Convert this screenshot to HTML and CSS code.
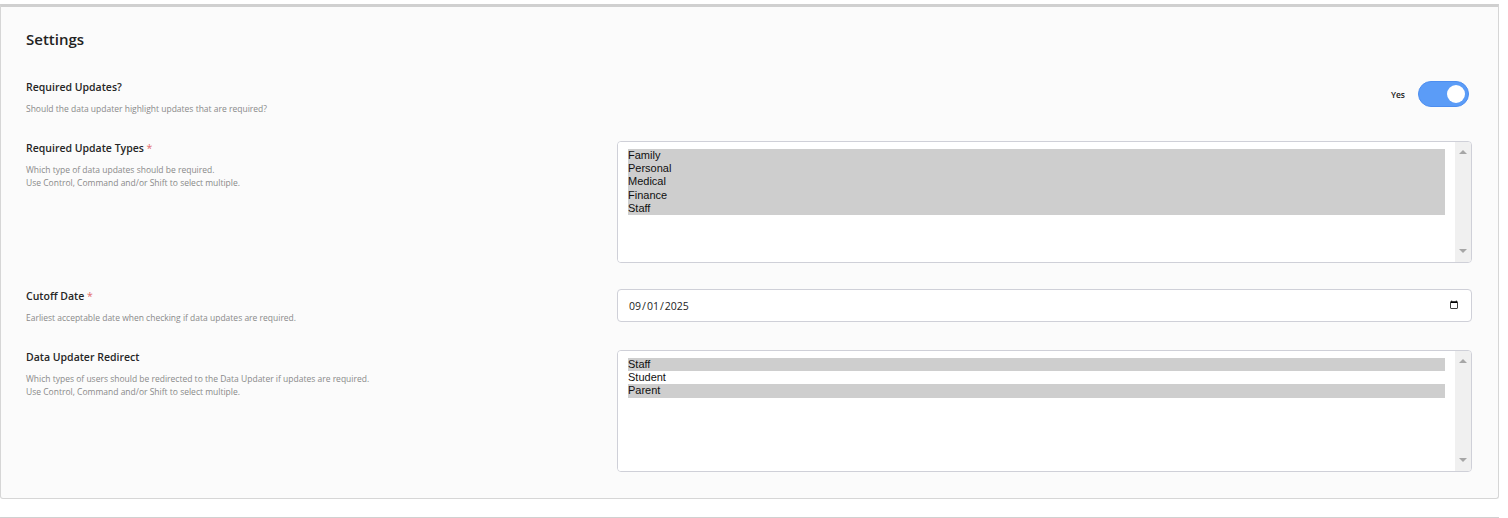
FILE: index.html
```html
<!DOCTYPE html>
<html lang="en-US">
<head>
    <meta charset="utf-8">
    <title>Settings</title>
    <link rel="stylesheet" href="styles.css">
</head>
<body>

<div class="card">
    <h2 class="card-title">Settings</h2>

    <div class="row row-switch">
        <div class="info">
            <label class="label">Required Updates?</label>
            <p class="help">Should the data updater highlight updates that are required?</p>
        </div>
        <div class="switch-wrap">
            <span class="switch-text">Yes</span>
            <span class="switch on"><span class="knob"></span></span>
        </div>
    </div>

    <div class="row">
        <div class="info">
            <label class="label">Required Update Types <span class="req">*</span></label>
            <p class="help">Which type of data updates should be required.<br>Use Control, Command and/or Shift to select multiple.</p>
        </div>
        <div class="listbox">
            <select multiple size="8">
                <option selected>Family</option>
                <option selected>Personal</option>
                <option selected>Medical</option>
                <option selected>Finance</option>
                <option selected>Staff</option>
            </select>
            <div class="scrollbar"><span class="arrow up"></span><span class="arrow down"></span></div>
        </div>
    </div>

    <div class="row">
        <div class="info">
            <label class="label">Cutoff Date <span class="req">*</span></label>
            <p class="help">Earliest acceptable date when checking if data updates are required.</p>
        </div>
        <input class="date" type="date" value="2025-09-01">
    </div>

    <div class="row">
        <div class="info">
            <label class="label">Data Updater Redirect</label>
            <p class="help">Which types of users should be redirected to the Data Updater if updates are required.<br>Use Control, Command and/or Shift to select multiple.</p>
        </div>
        <div class="listbox">
            <select multiple size="8">
                <option selected>Staff</option>
                <option>Student</option>
                <option selected>Parent</option>
            </select>
            <div class="scrollbar"><span class="arrow up"></span><span class="arrow down"></span></div>
        </div>
    </div>
</div>

<div class="card next"></div>

</body>
</html>
```

FILE: styles.css
```css
body, html{
margin: 0;
padding: 0;
background-color: white;
font-family: "Open Sans", "Noto Sans", sans-serif;
color: #222;
}

body{
padding-top: 4px;
height: 514px;
overflow: hidden;
}

.card{
background-color: #fbfbfb;
border: 1px solid #d6d6d6;
border-top: 3px solid #d0d0d0;
border-radius: 0 0 3px 3px;
padding: 0 26px 26px 25px;
box-sizing: border-box;
margin-bottom: 18px;
width: 1499px;
}

.card.next{
height: 20px;
padding: 0;
border-bottom: none;
margin-bottom: 0;
}

.card-title{
font-size: 15px;
font-weight: 600;
margin: 0;
padding: 22px 0 31px;
line-height: 20px;
}

.row{
display: grid;
grid-template-columns: 591px 1fr;
margin-bottom: 26px;
}

.row:last-child{
margin-bottom: 0;
}

.row-switch{
display: flex;
align-items: flex-start;
justify-content: space-between;
}

.label{
display: block;
font-size: 10.5px;
font-weight: 600;
line-height: 14px;
color: #262626;
}

.req{
color: #e26b6b;
font-weight: 400;
}

.help{
font-size: 8.5px;
line-height: 13px;
color: #8a8a8a;
margin: 8px 0 0;
}

.switch-wrap{
display: flex;
align-items: center;
gap: 13px;
margin: 1px 3px 0 0;
}

.switch-text{
font-size: 8.5px;
font-weight: 600;
color: #222;
}

.switch{
display: block;
position: relative;
width: 49px;
height: 24px;
border-radius: 13px;
background-color: #5b9cf7;
border: 1px solid #4d8ef0;
}

.knob{
position: absolute;
top: 3px;
right: 3px;
width: 18px;
height: 18px;
border-radius: 50%;
background-color: white;
}

.listbox{
display: flex;
height: 122px;
box-sizing: border-box;
border: 1px solid #cfd0d8;
border-radius: 4px;
background-color: white;
overflow: hidden;
}

.listbox select{
flex: 1;
min-width: 0;
height: 100%;
border: none;
padding: 7px 10px;
background-color: white;
font-family: "Liberation Sans", Arial, sans-serif;
font-size: 11px;
color: #111;
outline: none;
}

.listbox option{
padding: 0;
line-height: 13.3px;
}

.listbox option:checked{
background-color: #cecece;
}

.scrollbar{
width: 16px;
background-color: #f0f0f0;
display: flex;
flex-direction: column;
justify-content: space-between;
align-items: center;
padding: 8px 0 9px;
}

.arrow{
width: 0;
height: 0;
border-left: 4px solid transparent;
border-right: 4px solid transparent;
}

.arrow.up{
border-bottom: 4px solid #a6a6a6;
}

.arrow.down{
border-top: 4px solid #a6a6a6;
}

.date{
height: 33px;
box-sizing: border-box;
border: 1px solid #cfd0d8;
border-radius: 4px;
background-color: white;
padding: 0 10px;
font-family: "Open Sans", "Noto Sans", sans-serif;
font-size: 10.5px;
color: #222;
}
```
